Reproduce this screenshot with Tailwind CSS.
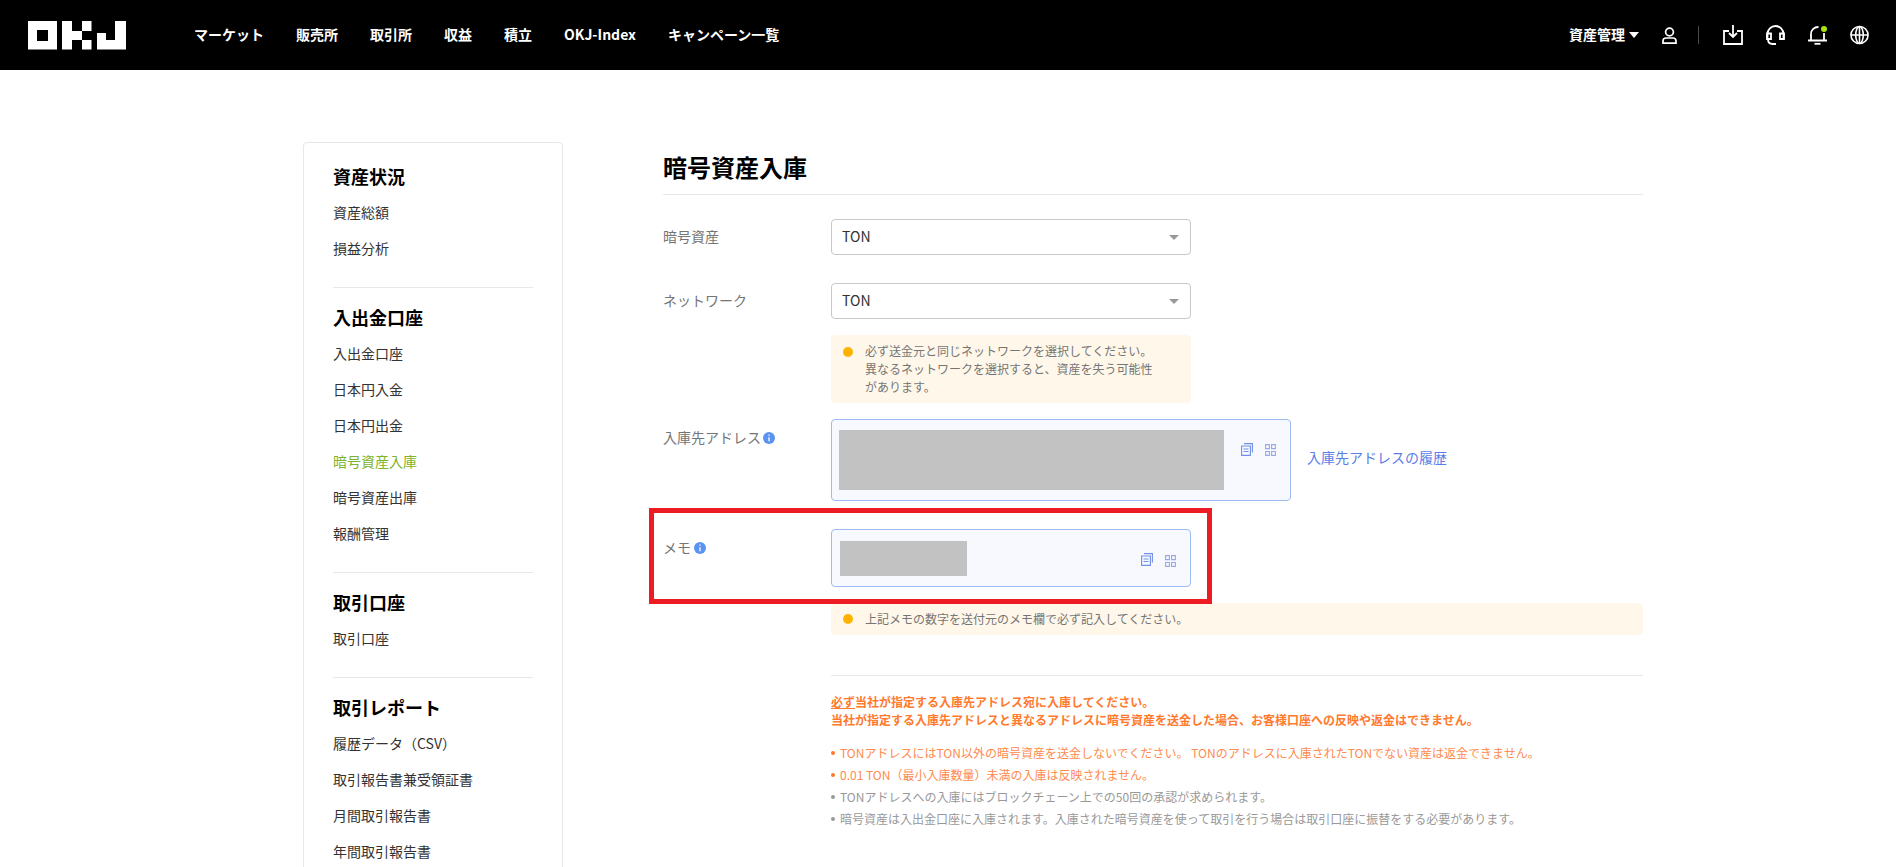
<!DOCTYPE html>
<html lang="ja">
<head>
    <meta charset="UTF-8">
    <meta name="viewport" content="width=device-width, initial-scale=1.0">
    <script src="https://cdn.jsdelivr.net/npm/@tailwindcss/browser@4"></script>
    <title>暗号資産入庫</title>
</head>
<body class="h-screen overflow-hidden bg-white font-['Noto_Sans_CJK_JP',sans-serif]">
    <!-- header -->
    <header class="h-[70px] bg-black text-white flex items-center pl-[28px]">
        <svg class="w-[98px] h-[29px]" viewBox="0 0 98 29" fill="#fff">
            <path fill-rule="evenodd" d="M0 0h29v28.500H0zM9 9v11h11V9z"/>
            <path d="M34 0h10v28.500H34zM44 10h10v9H44zM54 0h9.500v10H54zM54 19h9.500v9.500H54z"/>
            <path d="M87 0h11v28.500H69V12h9v7h9z"/>
        </svg>
        <nav class="flex items-center gap-[32px] ml-[68px] pb-[2px] text-sm font-bold">
            <a>マーケット</a>
            <a>販売所</a>
            <a>取引所</a>
            <a>収益</a>
            <a>積立</a>
            <a>OKJ-Index</a>
            <a>キャンペーン一覧</a>
        </nav>
        <div class="ml-auto flex items-center pr-[27px]">
            <span class="text-sm font-bold pb-[2px]">資産管理</span>
            <span class="ml-[4px] w-0 h-0 border-x-[5px] border-x-transparent border-t-[6px] border-t-white"></span>
            <svg class="ml-[23px] w-[15px] h-[17px]" viewBox="0 0 15 17" fill="none" stroke="#fff" stroke-width="1.7">
                <circle cx="7.500" cy="5" r="3.900"/>
                <path d="M4 11h7a3 3 0 0 1 3 3v2.100H1V14a3 3 0 0 1 3-3z"/>
            </svg>
            <span class="ml-[21px] w-px h-[18px] bg-[#4a4a4a]"></span>
            <svg class="ml-[24px] w-[20px] h-[20px]" viewBox="0 0 20 20" fill="none" stroke="#fff" stroke-width="1.8">
                <path d="M6 6H1v13h18V6h-5"/>
                <path d="M10 0v12M6 8l4 4 4-4"/>
            </svg>
            <svg class="ml-[23px] w-[19px] h-[20px]" viewBox="0 0 19 20" fill="none" stroke="#fff" stroke-width="1.800">
                <path d="M1.500 13V9a8 8 0 0 1 16 0v5"/>
                <path d="M5 8.500H1v5.500h4zM18 8.500h-4V14h4z"/>
                <path d="M2 14c0 3 1.500 5 4.500 5H10"/>
            </svg>
            <span class="relative ml-[23px] w-[19px] h-[20px]">
                <svg class="w-[19px] h-[20px]" viewBox="0 0 19 20" fill="none" stroke="#fff" stroke-width="1.800">
                    <path d="M0 15.500h19M3 15V9a7 7 0 0 1 7.500-7"/>
                    <path d="M16 8v7"/>
                    <path d="M6.500 18.800h6"/>
                </svg>
                <span class="absolute right-0 top-[1px] w-[6px] h-[6px] rounded-full bg-[#a9e40b]"></span>
            </span>
            <svg class="ml-[23px] w-[19px] h-[20px]" viewBox="0 0 20 20" fill="none" stroke="#fff" stroke-width="1.700">
                <circle cx="10" cy="10" r="9"/>
                <ellipse cx="10" cy="10" rx="4" ry="9"/>
                <path d="M10 1v18M1 10h18"/>
            </svg>
        </div>
    </header>

    <div class="flex items-start pt-[72px] pl-[303px]">
        <!-- sidebar -->
        <aside class="w-[260px] shrink-0 border border-[#e8e8e8] rounded-[4px] px-[29px] pt-[19px] pb-[20px] text-sm text-[#333]">
            <h3 class="text-lg font-bold text-black h-[28px] leading-[28px]">資産状況</h3>
            <ul class="mt-[4px]">
                <li class="h-9 leading-9">資産総額</li>
                <li class="h-9 leading-9">損益分析</li>
            </ul>
            <hr class="mt-[21px] mb-[15px] border-[#e8e8e8]">
            <h3 class="text-lg font-bold text-black h-[28px] leading-[28px]">入出金口座</h3>
            <ul class="mt-[4px]">
                <li class="h-9 leading-9">入出金口座</li>
                <li class="h-9 leading-9">日本円入金</li>
                <li class="h-9 leading-9">日本円出金</li>
                <li class="h-9 leading-9 text-[#7fb32a]">暗号資産入庫</li>
                <li class="h-9 leading-9">暗号資産出庫</li>
                <li class="h-9 leading-9">報酬管理</li>
            </ul>
            <hr class="mt-[21px] mb-[15px] border-[#e8e8e8]">
            <h3 class="text-lg font-bold text-black h-[28px] leading-[28px]">取引口座</h3>
            <ul class="mt-[4px]">
                <li class="h-9 leading-9">取引口座</li>
            </ul>
            <hr class="mt-[21px] mb-[15px] border-[#e8e8e8]">
            <h3 class="text-lg font-bold text-black h-[28px] leading-[28px]">取引レポート</h3>
            <ul class="mt-[4px]">
                <li class="h-9 leading-9">履歴データ（CSV）</li>
                <li class="h-9 leading-9">取引報告書兼受領証書</li>
                <li class="h-9 leading-9">月間取引報告書</li>
                <li class="h-9 leading-9">年間取引報告書</li>
            </ul>
        </aside>

        <!-- main -->
        <main class="relative w-[980px] ml-[100px] text-sm text-[#757575]">
            <h1 class="h-[53px] border-b border-[#e8e8e8] text-2xl font-bold text-black leading-[50px]">暗号資産入庫</h1>

            <div class="flex mt-[24px]">
                <label class="w-[168px] leading-[34px]">暗号資産</label>
                <div class="w-[360px] h-9 border border-[#c8c8c8] rounded-[4px] flex items-center justify-between pl-[10px] pr-[11px] text-[#333]">
                    <span class="pb-[2px]">TON</span>
                    <span class="w-0 h-0 border-x-[5px] border-x-transparent border-t-[5px] border-t-[#999]"></span>
                </div>
            </div>
            <div class="flex mt-[28px]">
                <label class="w-[168px] leading-[34px]">ネットワーク</label>
                <div class="w-[360px] h-9 border border-[#c8c8c8] rounded-[4px] flex items-center justify-between pl-[10px] pr-[11px] text-[#333]">
                    <span class="pb-[2px]">TON</span>
                    <span class="w-0 h-0 border-x-[5px] border-x-transparent border-t-[5px] border-t-[#999]"></span>
                </div>
            </div>
            <div class="ml-[168px] mt-[16px] w-[360px] h-[68px] bg-[#fff8ea] rounded-[4px] flex pl-[12px] pt-[7px] text-xs leading-[18px]">
                <span class="mt-[5px] w-[10px] h-[10px] shrink-0 rounded-full bg-[#ffb300]"></span>
                <p class="ml-[12px] w-[300px]">必ず送金元と同じネットワークを選択してください。<br>異なるネットワークを選択すると、資産を失う可能性<br>があります。</p>
            </div>

            <div class="flex mt-[16px]">
                <label class="w-[168px] h-[36px] self-start flex items-center">入庫先アドレス
                    <svg class="ml-[2px] mt-[2px] w-[12px] h-[12px]" viewBox="0 0 12 12"><circle cx="6" cy="6" r="6" fill="#5b93f0"/><path d="M6 2.600v1.200M6 5.200v4" stroke="#fff" stroke-width="1.300"/></svg>
                </label>
                <div class="w-[460px] h-[82px] border border-[#9dbdf5] rounded-[4px] bg-[#f8f9ff] flex pl-[7px] pt-[10px]">
                    <div class="w-[385px] h-[60px] bg-[#c2c2c2]"></div>
                    <svg class="ml-[17px] mt-[13px] w-[12px] h-[13px]" viewBox="0 0 12 13" fill="none" stroke="#6f8fe8" stroke-width="1.100">
                        <path d="M.6 3h8.800v9.400H.6zM2.500 6h5M2.500 8.500h5M3 .6h8.400v9"/>
                    </svg>
                    <svg class="ml-[12px] mt-[14px] w-[11px] h-[12px]" viewBox="0 0 11 12" fill="none" stroke="#9aa8e8" stroke-width="1.100">
                        <path d="M.6.600h3.800v4H.6zM6.600.600h3.800v4H6.600zM.6 7.500h3.800v3.900H.6zM6.600 7.500h3.800v3.900H6.600z"/>
                    </svg>
                </div>
                <a class="ml-[16px] mt-[27px] leading-[22px] h-[22px] text-[#5a7de8]">入庫先アドレスの履歴</a>
            </div>

            <div class="flex mt-[28px]">
                <label class="w-[168px] h-[36px] self-start flex items-center">メモ
                    <svg class="ml-[3px] mt-[2px] w-[12px] h-[12px]" viewBox="0 0 12 12"><circle cx="6" cy="6" r="6" fill="#5b93f0"/><path d="M6 2.600v1.200M6 5.200v4" stroke="#fff" stroke-width="1.300"/></svg>
                </label>
                <div class="w-[360px] h-[58px] border border-[#9dbdf5] rounded-[4px] bg-[#f8f9ff] flex pl-[8px] pt-[11px]">
                    <div class="w-[127px] h-[35px] bg-[#c2c2c2]"></div>
                    <svg class="ml-[174px] mt-[12px] w-[12px] h-[13px]" viewBox="0 0 12 13" fill="none" stroke="#6f8fe8" stroke-width="1.100">
                        <path d="M.6 3h8.800v9.400H.6zM2.500 6h5M2.500 8.500h5M3 .6h8.400v9"/>
                    </svg>
                    <svg class="ml-[12px] mt-[14px] w-[11px] h-[12px]" viewBox="0 0 11 12" fill="none" stroke="#9aa8e8" stroke-width="1.100">
                        <path d="M.6.600h3.800v4H.6zM6.600.600h3.800v4H6.600zM.6 7.500h3.800v3.900H.6zM6.600 7.500h3.800v3.900H6.600z"/>
                    </svg>
                </div>
            </div>
            <div class="ml-[168px] mt-[16px] h-[32px] bg-[#fff8ea] rounded-[4px] flex items-center pl-[12px] text-xs">
                <span class="w-[10px] h-[10px] rounded-full bg-[#ffb300]"></span>
                <p class="ml-[12px]">上記メモの数字を送付元のメモ欄で必ず記入してください。</p>
            </div>

            <div class="ml-[168px] mt-[40px] border-t border-[#e8e8e8] pt-[17px] text-xs">
                <p class="font-bold text-[#ff7a2e] leading-[18px]"><span class="underline">必ず</span>当社が指定する入庫先アドレス宛に入庫してください。<br>当社が指定する入庫先アドレスと異なるアドレスに暗号資産を送金した場合、お客様口座への反映や返金はできません。</p>
                <ul class="mt-[13px] leading-[22px]">
                    <li class="flex items-center text-[#ff8a4d]"><span class="w-[4px] h-[4px] rounded-full bg-[#ff7a2e] mr-[5px]"></span>TONアドレスにはTON以外の暗号資産を送金しないでください。 TONのアドレスに入庫されたTONでない資産は返金できません。</li>
                    <li class="flex items-center text-[#ff8a4d]"><span class="w-[4px] h-[4px] rounded-full bg-[#ff7a2e] mr-[5px]"></span>0.01 TON（最小入庫数量）未満の入庫は反映されません。</li>
                    <li class="flex items-center text-[#999]"><span class="w-[4px] h-[4px] rounded-full bg-[#999] mr-[5px]"></span>TONアドレスへの入庫にはブロックチェーン上での50回の承認が求められます。</li>
                    <li class="flex items-center text-[#999]"><span class="w-[4px] h-[4px] rounded-full bg-[#999] mr-[5px]"></span>暗号資産は入出金口座に入庫されます。入庫された暗号資産を使って取引を行う場合は取引口座に振替をする必要があります。</li>
                </ul>
            </div>

            <!-- red annotation frame -->
            <div class="absolute left-[-14px] top-[366px] w-[563px] h-[96px] border-[5px] border-[#ed1c24]"></div>
        </main>
    </div>
</body>
</html>
